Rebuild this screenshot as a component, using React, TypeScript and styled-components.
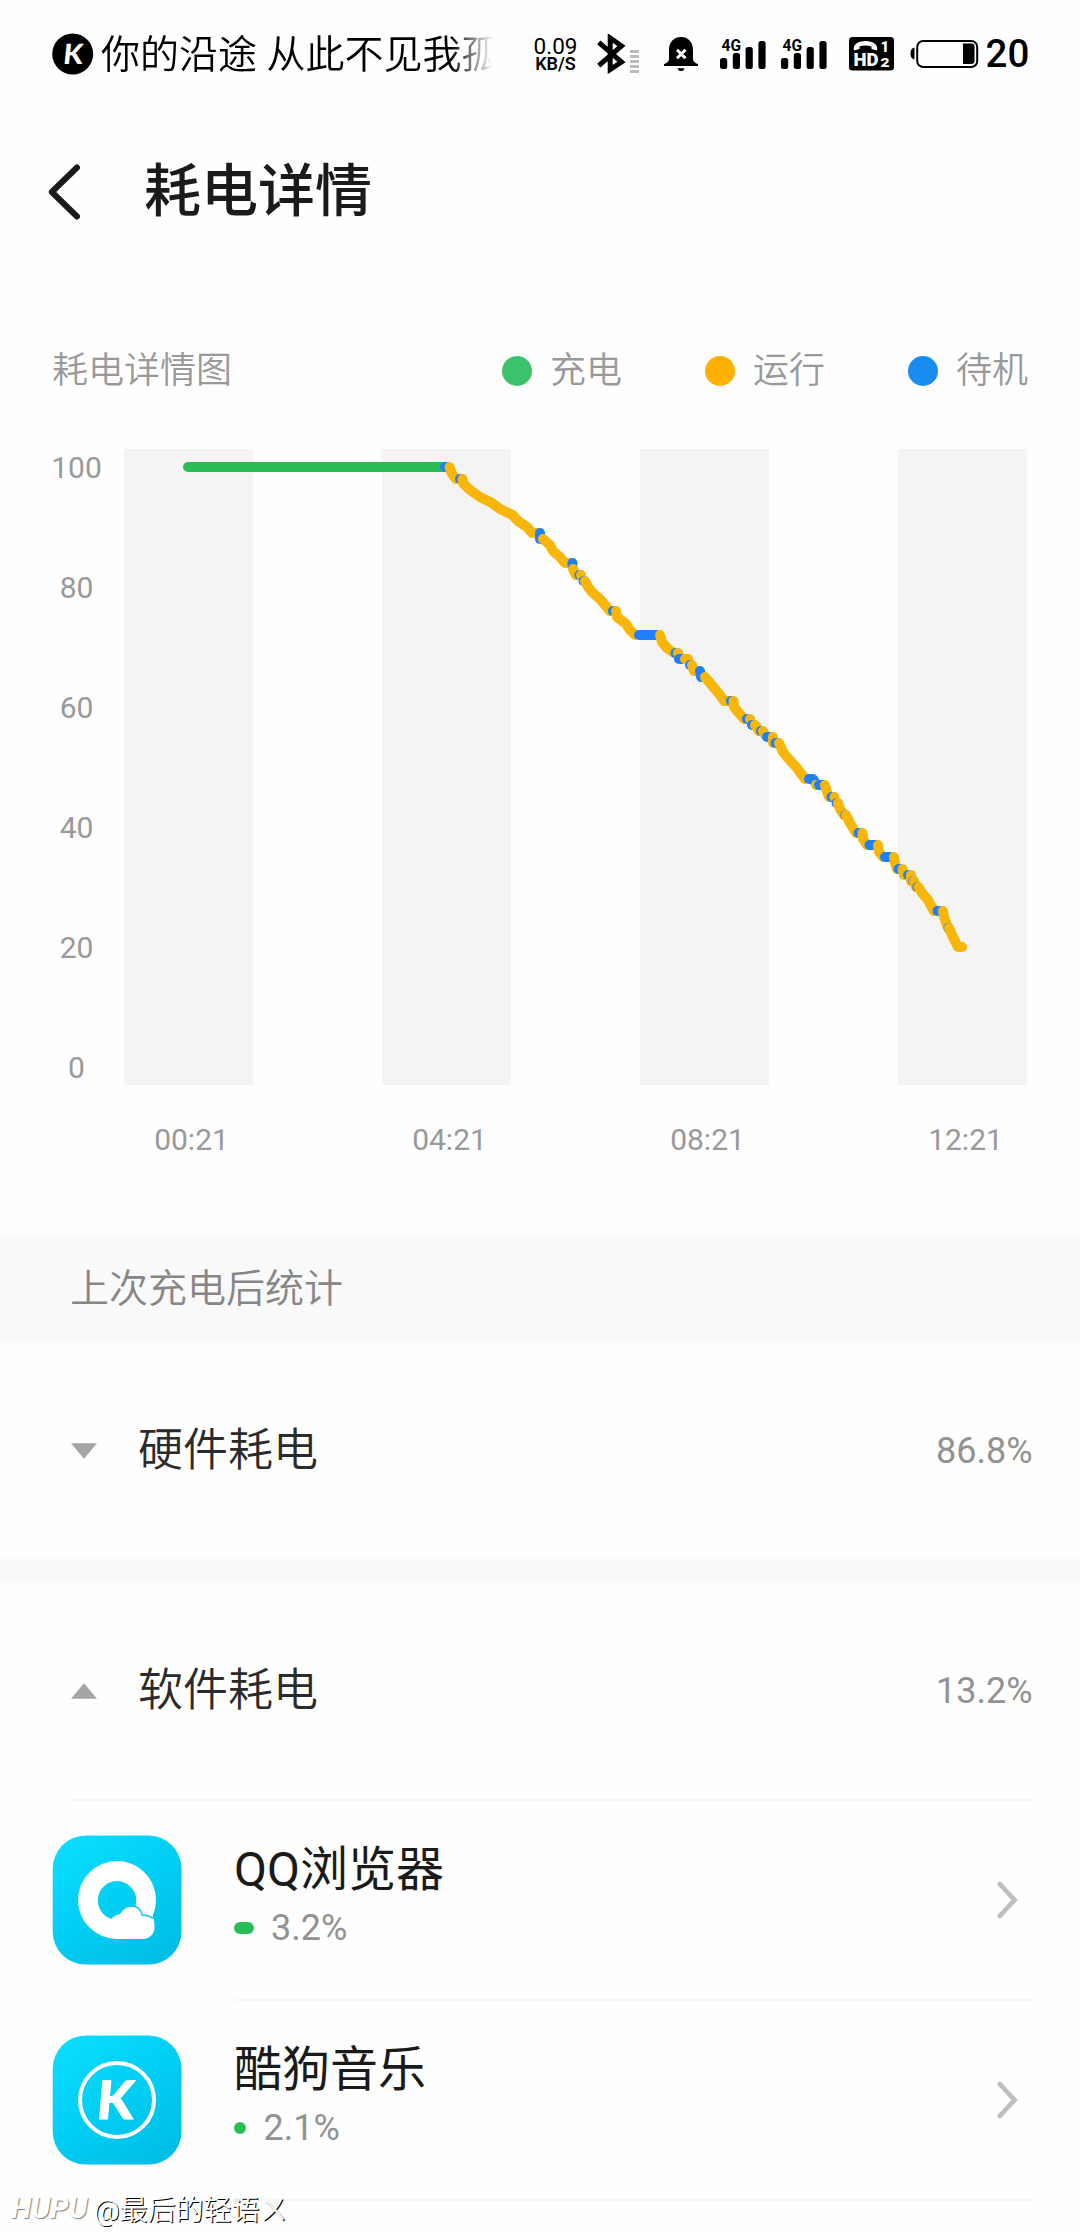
import React from "react";
import styled, { createGlobalStyle } from "styled-components";

const GlobalStyle = createGlobalStyle`
  * { box-sizing: border-box; }
  html, body { margin: 0; padding: 0; background: #fefefe; }
  body {
    font-family: Roboto, "Noto Sans CJK SC", sans-serif;
    color: #1a1a1a;
  }
  svg { display: block; flex: none; }
`;

const Screen = styled.main`
  position: relative;
  display: flex;
  flex-direction: column;
  width: 1080px;
  height: 2232px;
  overflow: hidden;
  background: #fefefe;
`;

/* ---------- status bar ---------- */

const StatusBar = styled.header`
  display: flex;
  align-items: center;
  height: 108px;
  padding-left: 52px;
  color: #000;
`;

const Ticker = styled.div`
  width: 402px;
  margin-left: 7px;
  padding-top: 1px;
  overflow: hidden;
  white-space: nowrap;
  font-size: 39px;
  font-weight: 350;
  line-height: 60px;
  mask-image: linear-gradient(to right, #000 350px, transparent 392px);
`;

const NetSpeed = styled.div`
  display: flex;
  flex-direction: column;
  align-items: center;
  width: 44px;
  margin-left: 30.5px;
`;

const SpeedValue = styled.span`
  font-size: 22.5px;
  line-height: 18px;
`;

const SpeedUnit = styled.span`
  font-size: 18px;
  font-weight: 600;
  line-height: 17px;
`;

const StatusIcons = styled.div`
  display: flex;
  align-items: center;
  margin-left: 19px;
`;

const Percent = styled.span`
  margin-left: 7px;
  font-size: 38.5px;
  font-weight: 500;
  line-height: 60px;
`;

const Gap = styled.span<{ $w: number }>`
  width: ${(p) => p.$w}px;
`;

/* ---------- title bar ---------- */

const TitleBar = styled.div`
  display: flex;
  align-items: center;
  height: 168px;
  padding-left: 48px;
`;

const Title = styled.h1`
  margin: 0 0 0 62px;
  font-size: 57px;
  font-weight: 500;
  line-height: 84px;
`;

/* ---------- chart ---------- */

const ChartSection = styled.section`
  display: flex;
  flex-direction: column;
  height: 959px;
  padding: 65px 52px 0 52px;
  color: #999;
`;

const ChartHead = styled.div`
  display: flex;
  align-items: center;
  justify-content: space-between;
  height: 60px;
  font-size: 36px;
  font-weight: 350;
  line-height: 60px;
`;

const Legend = styled.div`
  display: flex;
  gap: 83px;
`;

const LegendItem = styled.div`
  display: flex;
  align-items: center;
  gap: 18px;
`;

const Dot = styled.span<{ $color: string }>`
  width: 30px;
  height: 30px;
  border-radius: 50%;
  background: ${(p) => p.$color};
`;

const ChartBody = styled.div`
  display: flex;
  margin-top: 48px;
`;

const YAxis = styled.div`
  display: flex;
  flex-direction: column;
  align-items: center;
  justify-content: space-between;
  width: 49px;
  height: 638px;
  margin-right: 23px;
`;

const YLabel = styled.span`
  font-size: 30px;
  line-height: 38px;
`;

const XAxis = styled.div`
  display: grid;
  grid-template-columns: repeat(4, 258px);
  margin: 32px 0 0 75px;
`;

const XLabel = styled.span`
  width: 129px;
  text-align: center;
  font-size: 30px;
  line-height: 42px;
`;

/* ---------- lists ---------- */

const SectionHeader = styled.h2`
  margin: 0;
  height: 108px;
  padding-left: 70px;
  background: #f9f9f9;
  color: #868686;
  font-size: 39px;
  font-weight: 350;
  line-height: 108px;
`;

const GroupRow = styled.div`
  display: flex;
  align-items: center;
  height: 216px;
  padding: 0 47.5px 0 71px;
`;

const Arrow = styled.span<{ $open?: boolean }>`
  width: 26px;
  height: 15.5px;
  background: #a5a5a5;
  clip-path: ${(p) =>
    p.$open ? "polygon(50% 0, 100% 100%, 0 100%)" : "polygon(0 0, 100% 0, 50% 100%)"};
`;

const GroupName = styled.span`
  flex: 1;
  margin-left: 41px;
  color: #2b2b2b;
  font-size: 45px;
  font-weight: 350;
  line-height: 64px;
`;

const Value = styled.span`
  color: #929292;
  font-size: 36px;
  line-height: 42px;
`;

const Separator = styled.div`
  height: 24px;
  background: #f9f9f9;
`;

const Divider = styled.div`
  height: 2px;
  margin: 0 48px 0 70px;
  background: #f7f7f7;
`;

const AppRow = styled.div`
  display: flex;
  height: 200px;
  padding-left: 52px;
`;

const IconCell = styled.div`
  width: 182px;
  padding-top: 34px;
`;

const AppBody = styled.div`
  display: flex;
  flex: 1;
  align-items: center;
  margin-right: 48px;
  padding-right: 14px;
  border-bottom: 2px solid #f7f7f7;
`;

const AppText = styled.div`
  flex: 1;
  display: flex;
  flex-direction: column;
  padding-bottom: 11px;
`;

const AppName = styled.span`
  font-size: 48px;
  line-height: 66px;
`;

const Usage = styled.div`
  display: flex;
  align-items: center;
  gap: 17.5px;
  height: 50px;
`;

const UsageBar = styled.span<{ $w: number }>`
  width: ${(p) => p.$w}px;
  height: 12px;
  border-radius: 6px;
  background: #2bbd55;
`;

const Watermark = styled.div`
  position: absolute;
  left: 11px;
  bottom: 5px;
  display: flex;
  align-items: center;
  height: 38px;
  color: #fff;
  font-size: 28px;
  font-weight: 350;
  white-space: nowrap;
  text-shadow: 1px 1px 0.5px #000;
`;

const Brand = styled.span`
  width: 83px;
  font-size: 29.5px;
  font-weight: 700;
  font-style: italic;
  text-shadow: 1px 1px 1px rgba(0, 0, 0, 0.5);
`;

/* ---------- drawings ---------- */

const MusicBadge = () => (
  <svg width="42" height="42" viewBox="0 0 42 42">
    <circle cx="20.7" cy="21" r="20.5" fill="#000" />
    <text
      transform="translate(10.5 31.3) skewX(-6)"
      fontFamily="Lato, sans-serif"
      fontWeight="900"
      fontSize="28"
      fill="#fff"
    >
      K
    </text>
  </svg>
);

const Bluetooth = () => (
  <svg width="42" height="40" viewBox="0 0 42 40">
    <path
      d="M1.8 8.3 24.5 28 13.2 35.5V4L24.5 12 1.8 31.7"
      fill="none"
      stroke="#000"
      strokeWidth="5"
    />
    {[16, 21, 26, 31, 36].map((y) => (
      <rect key={y} x="33" y={y} width="9" height="3" fill="#bbb" />
    ))}
  </svg>
);

const MutedBell = () => (
  <svg width="34" height="36" viewBox="0 0 34 36">
    <path d="M5 14.5C5 5.5 10 1 17 1s12 4.500 12 13.500V23c0 2.500 2 4 5 5v2H0v-2c3-1 5-2.500 5-5z" fill="#000" />
    <path d="M13.500 32.200h7c-.5 2-1.800 2.800-3.500 2.800s-3-.8-3.500-2.800z" fill="#000" />
    <path d="m13 13.800 8.500 8.500m0-8.500L13 22.300" stroke="#fff" strokeWidth="3" />
  </svg>
);

const Signal = () => (
  <svg width="47" height="36" viewBox="0 0 47 36">
    <text
      x="1.500"
      y="14.500"
      fontFamily="Roboto, sans-serif"
      fontWeight="700"
      fontSize="17"
      textLength="19.500"
      lengthAdjust="spacingAndGlyphs"
    >
      4G
    </text>
    <rect x="0" y="22" width="7.200" height="11" rx="2.500" />
    <rect x="12.800" y="17" width="7.200" height="16" rx="2.500" />
    <rect x="25.600" y="11" width="7.200" height="22" rx="2.500" />
    <rect x="38.400" y="5" width="7.200" height="28" rx="2.500" />
  </svg>
);

const HdCall = () => (
  <svg width="45" height="34" viewBox="0 0 45 34">
    <rect width="45" height="33.500" rx="3.500" />
    <path
      d="M5 13.500C3.500 8 8.500 4 16.500 4S29.500 8 28 13.500l-5.500-1.500V9.500c-3.500-1.200-8.500-1.200-12 0V12z"
      fill="#fff"
    />
    <g fill="#fff" fontFamily="Roboto, sans-serif" fontWeight="900">
      <text x="4.500" y="29" fontSize="18" textLength="25" lengthAdjust="spacingAndGlyphs">HD</text>
      <text x="31.500" y="14.500" fontSize="15">1</text>
      <text x="31.500" y="29.500" fontSize="13" textLength="9" lengthAdjust="spacingAndGlyphs">2</text>
    </g>
  </svg>
);

const Battery = () => (
  <svg width="69" height="30" viewBox="0 0 69 30">
    <path d="M4.500 8.500v12C1.500 20 .5 17.500.5 14.500s1-5.500 4-6z" />
    <rect x="7.200" y="2" width="60" height="26" rx="6" fill="none" stroke="#000" strokeWidth="2" />
    <path d="M53 4.500h8.500q3 0 3 3V22q0 3-3 3H53z" />
  </svg>
);

const BackArrow = () => (
  <svg width="34" height="56" viewBox="0 0 34 56">
    <path
      d="M29 3.500 3.800 28 29 52.500"
      fill="none"
      stroke="#1a1a1a"
      strokeWidth="6"
      strokeLinecap="round"
      strokeLinejoin="round"
    />
  </svg>
);

const Chevron = () => (
  <svg width="21" height="38" viewBox="0 0 21 38">
    <path
      d="M2.800 3 17.500 19 2.800 35"
      fill="none"
      stroke="#bfbfbf"
      strokeWidth="4.800"
      strokeLinecap="round"
    />
  </svg>
);

const Tile = ({ id, children }: { id: string; children: React.ReactNode }) => (
  <svg width="130" height="130" viewBox="0 0 130 130">
    <defs>
      <linearGradient id={id} x1="0" y1="0" x2="0.7" y2="1">
        <stop offset="0" stopColor="#0ddfff" />
        <stop offset="0.5" stopColor="#02d0f5" />
        <stop offset="1" stopColor="#00bfe6" />
      </linearGradient>
    </defs>
    <rect x="0.700" y="0.600" width="128.800" height="129" rx="33" fill={`url(#${id})`} />
    {children}
  </svg>
);

const BrowserIcon = () => (
  <Tile id="tile-browser">
    <path
      fill="#fff"
      fillRule="evenodd"
      d="M65 26a39 39 0 0 1 35.500 55q2 3.500 2 11a11.500 11.500 0 0 1-11 12H65a39 39 0 0 1 0-78zm.5 20a19.500 19.500 0 0 0-6.300 38q4-4.500 9-5 4-7.500 11.500-7.500l3.500.5A19.500 19.500 0 0 0 65.500 46z"
    />
    <path
      d="M79 71c6 0 10 3.500 11.300 9.300q6-.8 10.700 3.200"
      fill="none"
      stroke="#04c8ee"
      strokeWidth="1.500"
    />
  </Tile>
);

const MusicIcon = () => (
  <Tile id="tile-music">
    <circle cx="65" cy="65" r="37" fill="none" stroke="#fff" strokeWidth="4" />
    <text
      transform="translate(43.500 84) skewX(-5)"
      fontFamily="Lato, sans-serif"
      fontWeight="900"
      fontSize="53"
      fill="#fff"
      stroke="#fff"
      strokeWidth="1"
    >
      K
    </text>
  </Tile>
);

/* ---------- discharge curve ---------- */

type Mode = "charge" | "run" | "idle";

const modeColor: Record<Mode, string> = {
  charge: "#2abd55",
  run: "#f9b60a",
  idle: "#1e80fa",
};

const segments: [Mode, string][] = [
  ["charge", "188,467 444,467"],
  ["idle", "445,467 447,467"],
  ["run", "449.5,467 452,474 456,479"],
  ["idle", "460,479 461,479"],
  ["run", "462.5,479 463,483 470,490 480,497 492,503 500,509 512.500,515 518,521 527,527 532,533 537,533"],
  ["idle", "540,533 540,539"],
  ["run", "543,539 550,545 553,551 560,557 565,563 570,563"],
  ["idle", "572.500,563 572.500,565"],
  ["run", "573,569 576,575"],
  ["idle", "579.500,575 580,575"],
  ["run", "581,575"],
  ["idle", "583.500,581 584,581"],
  ["run", "585,581 588,587 593,593 600,599 605,605 610,611"],
  ["idle", "613,611 614.500,611"],
  ["run", "616,611 617,617 626,624 630,630 635,635"],
  ["idle", "639,635 656,635"],
  ["run", "660,635 662,642 667,648 674,653"],
  ["idle", "675.500,653 676,653"],
  ["run", "678,653"],
  ["idle", "679,659 682,659"],
  ["run", "685,659 688,659"],
  ["idle", "690,665 691,665"],
  ["run", "692,665 694,671 697,671"],
  ["idle", "700,671 701,677"],
  ["run", "705,677 720,695 724,701 728,701"],
  ["idle", "731,701 732,701"],
  ["run", "733.500,701 734,707 744,719"],
  ["idle", "747,719 748,719"],
  ["run", "750,719"],
  ["idle", "752,725 753,725"],
  ["run", "755,725 759,731"],
  ["idle", "761,731 761.500,731"],
  ["run", "763,731 765,735"],
  ["idle", "767,737 769,737"],
  ["run", "773,737 773,743"],
  ["idle", "775.500,743 777,743"],
  ["run", "779,743 783,752 787,757 797,768 805,779"],
  ["idle", "809,779 813,779 817,785"],
  ["run", "816,785"],
  ["idle", "819,785 822,785"],
  ["run", "825,785 827,792 829,797"],
  ["idle", "831.500,797 833,797"],
  ["run", "834.500,797"],
  ["idle", "836.500,803"],
  ["run", "838,803 840,809 844,815"],
  ["idle", "845.300,815"],
  ["run", "846,815 850,823 856,833"],
  ["idle", "858.500,833 860,833"],
  ["run", "862.500,833 863,839 867,845"],
  ["idle", "869.500,845 875,845"],
  ["run", "878,845 879,852 883,857"],
  ["idle", "885,857 890,857"],
  ["run", "894,857 895,863 897,869"],
  ["idle", "898.500,869 900,869"],
  ["run", "902.500,869 904,875"],
  ["idle", "908,875 909,875"],
  ["run", "911,875 911,881"],
  ["idle", "913.300,881"],
  ["run", "914,881 916,887"],
  ["idle", "917.300,887"],
  ["run", "918.500,887 922,893 928,900 934,911"],
  ["idle", "937.500,911 940,911"],
  ["run", "943,911 944,917 948,928"],
  ["idle", "948.500,927.800"],
  ["run", "949,928 953,937 958,947 962,947"],
];

const Plot = () => (
  <svg width="903" height="636" viewBox="124 449 903 636">
    {[124, 382, 640, 898].map((x) => (
      <rect key={x} x={x} y="449" width="129" height="636" fill="#f4f4f4" />
    ))}
    <g fill="none" strokeWidth="10" strokeLinecap="round" strokeLinejoin="round">
      {segments.map(([mode, pts], i) => (
        <path key={i} d={`M${pts.includes(" ") ? pts : `${pts} ${pts}`}`} stroke={modeColor[mode]} />
      ))}
    </g>
  </svg>
);

const legend = [
  { label: "充电", color: "#3dc26c" },
  { label: "运行", color: "#ffb000" },
  { label: "待机", color: "#198cef" },
];

const apps = [
  { name: "QQ浏览器", value: "3.2%", bar: 19.5, Icon: BrowserIcon },
  { name: "酷狗音乐", value: "2.1%", bar: 12, Icon: MusicIcon },
];

export default function App() {
  return (
    <>
      <GlobalStyle />
      <Screen>
        <StatusBar>
          <MusicBadge />
          <Ticker>你的沿途 从此不见我孤</Ticker>
          <NetSpeed>
            <SpeedValue>0.09</SpeedValue>
            <SpeedUnit>KB/S</SpeedUnit>
          </NetSpeed>
          <StatusIcons>
            <Bluetooth />
            <Gap $w={25} />
            <MutedBell />
            <Gap $w={22} />
            <Signal />
            <Gap $w={14.5} />
            <Signal />
            <Gap $w={20.5} />
            <HdCall />
            <Gap $w={16} />
            <Battery />
          </StatusIcons>
          <Percent>20</Percent>
        </StatusBar>

        <TitleBar>
          <BackArrow />
          <Title>耗电详情</Title>
        </TitleBar>

        <ChartSection>
          <ChartHead>
            <span>耗电详情图</span>
            <Legend>
              {legend.map((l) => (
                <LegendItem key={l.label}>
                  <Dot $color={l.color} />
                  <span>{l.label}</span>
                </LegendItem>
              ))}
            </Legend>
          </ChartHead>
          <ChartBody>
            <YAxis>
              {[100, 80, 60, 40, 20, 0].map((v) => (
                <YLabel key={v}>{v}</YLabel>
              ))}
            </YAxis>
            <Plot />
          </ChartBody>
          <XAxis>
            {["00:21", "04:21", "08:21", "12:21"].map((t) => (
              <XLabel key={t}>{t}</XLabel>
            ))}
          </XAxis>
        </ChartSection>

        <SectionHeader>上次充电后统计</SectionHeader>
        <GroupRow>
          <Arrow />
          <GroupName>硬件耗电</GroupName>
          <Value>86.8%</Value>
        </GroupRow>
        <Separator />
        <GroupRow>
          <Arrow $open />
          <GroupName>软件耗电</GroupName>
          <Value>13.2%</Value>
        </GroupRow>
        <Divider />

        {apps.map(({ name, value, bar, Icon }) => (
          <AppRow key={name}>
            <IconCell>
              <Icon />
            </IconCell>
            <AppBody>
              <AppText>
                <AppName>{name}</AppName>
                <Usage>
                  <UsageBar $w={bar} />
                  <Value>{value}</Value>
                </Usage>
              </AppText>
              <Chevron />
            </AppBody>
          </AppRow>
        ))}

        <Watermark>
          <Brand>HUPU</Brand>
          <span>@最后的轻语ㄨ</span>
        </Watermark>
      </Screen>
    </>
  );
}
